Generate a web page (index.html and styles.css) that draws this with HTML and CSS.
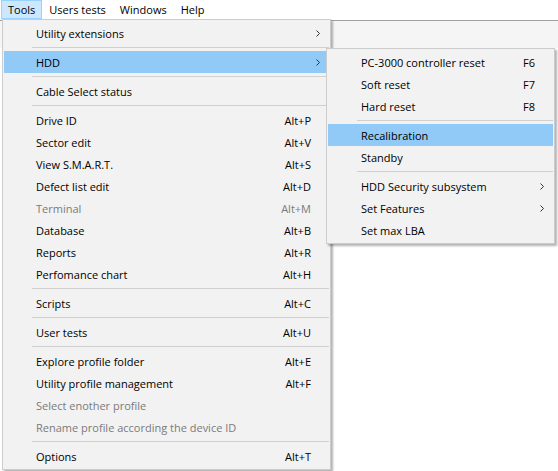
FILE: index.html
```html
<!DOCTYPE html>
<html lang="en">
<head>
<meta charset="UTF-8">
<title>Tools menu</title>
<link rel="stylesheet" href="styles.css">
</head>
<body>

<div class="menubar">
  <span class="mb-item active">Tools</span>
  <span class="mb-item">Users tests</span>
  <span class="mb-item">Windows</span>
  <span class="mb-item">Help</span>
</div>
<div class="toolbar"></div>
<div class="workspace"></div>

<!-- Tools dropdown -->
<div class="menu main-menu">
  <div class="item"><span class="label">Utility extensions</span><span class="key"></span><span class="arrow"><svg width="4" height="7" viewBox="0 0 4 7"><path d="M0.5 0.5 L3.5 3.5 L0.5 6.5" fill="none" stroke="#333" stroke-width="1"/></svg></span></div>
  <div class="sep"></div>
  <div class="item hover"><span class="label">HDD</span><span class="key"></span><span class="arrow"><svg width="4" height="7" viewBox="0 0 4 7"><path d="M0.5 0.5 L3.5 3.5 L0.5 6.5" fill="none" stroke="#333" stroke-width="1"/></svg></span></div>
  <div class="sep"></div>
  <div class="item"><span class="label">Cable Select status</span><span class="key"></span><span class="arrow"></span></div>
  <div class="sep"></div>
  <div class="item"><span class="label">Drive ID</span><span class="key">Alt+P</span><span class="arrow"></span></div>
  <div class="item"><span class="label">Sector edit</span><span class="key">Alt+V</span><span class="arrow"></span></div>
  <div class="item"><span class="label">View S.M.A.R.T.</span><span class="key">Alt+S</span><span class="arrow"></span></div>
  <div class="item"><span class="label">Defect list edit</span><span class="key">Alt+D</span><span class="arrow"></span></div>
  <div class="item disabled"><span class="label">Terminal</span><span class="key">Alt+M</span><span class="arrow"></span></div>
  <div class="item"><span class="label">Database</span><span class="key">Alt+B</span><span class="arrow"></span></div>
  <div class="item"><span class="label">Reports</span><span class="key">Alt+R</span><span class="arrow"></span></div>
  <div class="item"><span class="label">Perfomance chart</span><span class="key">Alt+H</span><span class="arrow"></span></div>
  <div class="sep"></div>
  <div class="item"><span class="label">Scripts</span><span class="key">Alt+C</span><span class="arrow"></span></div>
  <div class="sep"></div>
  <div class="item"><span class="label">User tests</span><span class="key">Alt+U</span><span class="arrow"></span></div>
  <div class="sep"></div>
  <div class="item"><span class="label">Explore profile folder</span><span class="key">Alt+E</span><span class="arrow"></span></div>
  <div class="item"><span class="label">Utility profile management</span><span class="key">Alt+F</span><span class="arrow"></span></div>
  <div class="item disabled"><span class="label">Select enother profile</span><span class="key"></span><span class="arrow"></span></div>
  <div class="item disabled"><span class="label">Rename profile according the device ID</span><span class="key"></span><span class="arrow"></span></div>
  <div class="sep"></div>
  <div class="item"><span class="label">Options</span><span class="key">Alt+T</span><span class="arrow"></span></div>
</div>

<!-- HDD submenu -->
<div class="menu sub-menu">
  <div class="item"><span class="label">PC-3000 controller reset</span><span class="key">F6</span><span class="arrow"></span></div>
  <div class="item"><span class="label">Soft reset</span><span class="key">F7</span><span class="arrow"></span></div>
  <div class="item"><span class="label">Hard reset</span><span class="key">F8</span><span class="arrow"></span></div>
  <div class="sep"></div>
  <div class="item hover"><span class="label">Recalibration</span><span class="key"></span><span class="arrow"></span></div>
  <div class="item"><span class="label">Standby</span><span class="key"></span><span class="arrow"></span></div>
  <div class="sep"></div>
  <div class="item"><span class="label">HDD Security subsystem</span><span class="key"></span><span class="arrow"><svg width="4" height="7" viewBox="0 0 4 7"><path d="M0.5 0.5 L3.5 3.5 L0.5 6.5" fill="none" stroke="#333" stroke-width="1"/></svg></span></div>
  <div class="item"><span class="label">Set Features</span><span class="key"></span><span class="arrow"><svg width="4" height="7" viewBox="0 0 4 7"><path d="M0.5 0.5 L3.5 3.5 L0.5 6.5" fill="none" stroke="#333" stroke-width="1"/></svg></span></div>
  <div class="item"><span class="label">Set max LBA</span><span class="key"></span><span class="arrow"></span></div>
</div>

</body>
</html>
```

FILE: styles.css
```css
body {
  margin: 0;
  width: 558px;
  height: 471px;
  position: relative;
  overflow: hidden;
  background: #fff;
  font-family: "Open Sans", "Noto Sans", sans-serif;
  font-size: 11px;
  color: #000;
}

/* Window menu bar */
.menubar {
  display: flex;
  height: 20px;
  padding-left: 1px;
  border-bottom: 1px solid #a0a0a0;
  background: #fff;
}

.mb-item {
  display: flex;
  align-items: center;
  height: 19px;
  padding: 0 6px;
  border: 1px solid transparent;
  box-sizing: border-box;
}

.mb-item.active {
  background: #cce8ff;
  border-color: #99d1ff;
}

.toolbar {
  height: 27px;
  background: #f5f5f5;
}

.workspace {
  height: 423px;
  background: #fff;
}

/* Popup menus */
.menu {
  position: absolute;
  box-sizing: border-box;
  background: #f2f2f2;
  border: 1px solid #cccccc;
  padding: 2px 0;
  box-shadow: 2px 2px 2px rgba(0, 0, 0, 0.3);
}

.main-menu {
  left: 2px;
  top: 19px;
  width: 329px;
}

.sub-menu {
  left: 326px;
  top: 48px;
  width: 229px;
}

.item {
  display: flex;
  align-items: center;
  height: 22px;
  margin: 0 1px;
  white-space: nowrap;
}

.main-menu .item {
  padding-left: 32px;
}

.sub-menu .item {
  padding-left: 33px;
}

.item.hover {
  background: #91c9f7;
}

.item.disabled {
  color: #7a7a7a;
}

.label {
  flex: 1;
}

.arrow {
  width: 18px;
  display: flex;
  align-items: center;
}

.arrow svg {
  margin-left: 5px;
}

.sep {
  height: 1px;
  background: #d0d0d0;
  margin: 3px 1px 3px 29px;
}

.sub-menu .sep {
  margin-left: 30px;
}
```
